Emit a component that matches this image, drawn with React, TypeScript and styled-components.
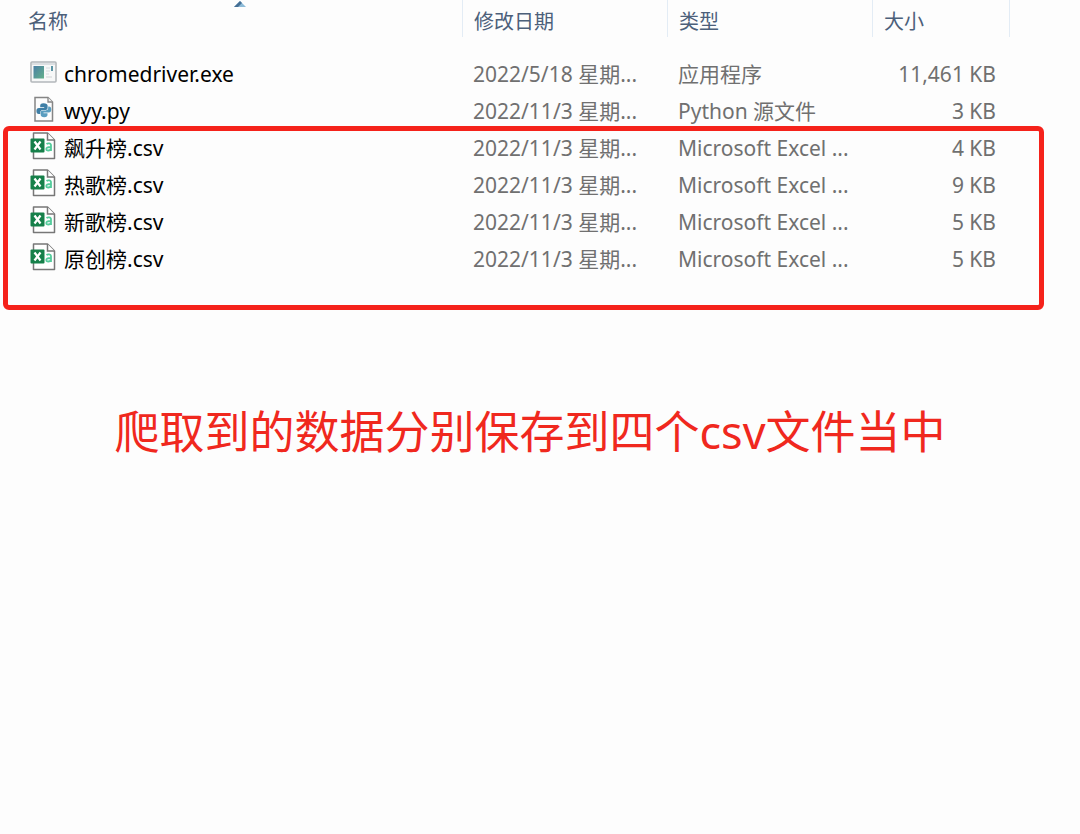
import React from 'react';
import styled, { createGlobalStyle } from 'styled-components';

const GlobalStyle = createGlobalStyle`
  *, *::before, *::after { box-sizing: border-box; }
  body {
    margin: 0;
    background: #fdfdfd;
    font-family: "Noto Sans", "Noto Sans CJK SC", sans-serif;
  }
`;

const Listing = styled.section`
  position: relative;
  padding: 0 70px 33px 0;
`;

const FileTable = styled.table`
  width: 100%;
  table-layout: fixed;
  border-collapse: collapse;
  font-size: 21px;
  line-height: 28px;
`;

const Column = styled.col<{ $width?: number }>`
  width: ${({ $width }) => ($width ? `${$width}px` : 'auto')};
`;

const HeaderCell = styled.th`
  height: 55px;
  padding: 0;
  vertical-align: top;
  font-size: 20px;
  font-weight: 400;
  text-align: left;
`;

const HeaderButton = styled.button<{ $indent: number }>`
  position: relative;
  display: flex;
  align-items: center;
  width: 100%;
  height: 37px;
  padding: 6px 0 0 ${({ $indent }) => $indent}px;
  border: 0;
  border-right: 1px solid #e3ecf5;
  background: none;
  color: #4c607a;
  font: inherit;
  cursor: pointer;
`;

const SortMark = styled.svg`
  position: absolute;
  top: 0;
  left: calc(50% + 2px);
`;

const Cell = styled.td<{ $right?: boolean }>`
  height: 37px;
  padding: 0 14px 0 10px;
  color: #707070;
  text-align: ${({ $right }) => ($right ? 'right' : 'left')};
  white-space: nowrap;
`;

const NameCell = styled(Cell)`
  padding-left: 30px;
  color: #000;
`;

const FileName = styled.div`
  display: flex;
  align-items: center;
  gap: 7px;
`;

const FileIcon = styled.svg`
  flex: none;
  margin-bottom: 4px;
`;

const Highlight = styled.div`
  position: absolute;
  inset: 126px 36px 0 3px;
  border: 5px solid #f5221b;
  border-radius: 6px;
  pointer-events: none;
`;

const Note = styled.p`
  margin: 0;
  padding: 90px 20px 0 0;
  color: #f0281e;
  font-size: 45px;
  line-height: 64px;
  text-align: center;
`;

function AppIcon() {
  return (
    <FileIcon width="27" height="28" viewBox="0 0 27 28" aria-hidden="true">
      <defs>
        <linearGradient id="screen" x1="0" y1="0" x2="1" y2="1">
          <stop offset="0" stopColor="#4b7fa5" />
          <stop offset="1" stopColor="#62b08a" />
        </linearGradient>
      </defs>
      <rect x="1" y="4" width="25" height="20" rx="1" fill="#f7f8f8" stroke="#b3b7ba" strokeWidth="1.6" />
      <path d="M2 6h23" stroke="#dcdfe2" strokeWidth="2" />
      <rect x="3.500" y="8" width="10.500" height="12.500" fill="url(#screen)" />
      <path d="M16 10h4M16 13h4M16 16h3" stroke="#d5dade" strokeWidth="1.200" />
      <path d="M22 8v5" stroke="#4a8a9c" strokeWidth="1.800" />
      <path d="M16 19h6" stroke="#dcdfe1" strokeWidth="1.500" />
    </FileIcon>
  );
}

function PythonIcon() {
  return (
    <FileIcon width="27" height="28" viewBox="0 0 27 28" aria-hidden="true">
      <path d="M5 2.500h13l4.500 4.500v19H5z" fill="#fdfdfd" stroke="#858585" strokeWidth="1.500" />
      <path d="M18 2.500v4.500h4.500" fill="#f0f0f0" stroke="#858585" strokeWidth="1.300" />
      <path
        d="M13.500 8.200c-2.500 0-3.300 1-3.300 2.400v1.600h4v.8H9c-1.800 0-2.600 1.300-2.600 3s.8 3 2.400 3h1.500v-1.700c0-1.300 1-2.300 2.300-2.300h3c1.200 0 2-.9 2-2v-2.400c0-1.400-1.300-2.400-4.100-2.400z"
        fill="#3f7fa6"
      />
      <path
        d="M14.200 22.200c2.500 0 3.300-1 3.300-2.400v-1.600h-4v-.8h5.200c1.800 0 2.600-1.300 2.600-3s-.8-3-2.400-3h-.7v1.700c0 1.300-1 2.300-2.300 2.300h-3.200c-1.200 0-2 .9-2 2v2.400c0 1.400 1.200 2.400 3.500 2.400z"
        fill="#5b9dbf"
      />
    </FileIcon>
  );
}

function CsvIcon() {
  return (
    <FileIcon width="27" height="28" viewBox="0 0 27 28" aria-hidden="true">
      <path d="M3.500 1h14l7 7v18.500h-21z" fill="#fff" stroke="#777" strokeWidth="1.500" strokeLinejoin="round" />
      <path d="M17.500 1v7h7" fill="#fff" stroke="#777" strokeWidth="1.500" />
      <path
        d="M16.500 12c1-.8 4.500-1.200 4.500 1.500v5.500M21 15c-2.500 0-4.700.2-4.700 2 0 2.300 3.800 1.700 4.700 0"
        fill="none"
        stroke="#55cc9c"
        strokeWidth="1.800"
      />
      <rect x="0.500" y="6.500" width="14" height="14" rx="1" fill="#16804a" />
      <path d="M4.500 9.500l6 8M10.500 9.500l-6 8" stroke="#fff" strokeWidth="2.200" />
    </FileIcon>
  );
}

const icons = { app: AppIcon, python: PythonIcon, csv: CsvIcon };

type FileRow = {
  name: string;
  date: string;
  type: string;
  size: string;
  kind: keyof typeof icons;
};

const files: FileRow[] = [
  { name: 'chromedriver.exe', date: '2022/5/18 星期...', type: '应用程序', size: '11,461 KB', kind: 'app' },
  { name: 'wyy.py', date: '2022/11/3 星期...', type: 'Python 源文件', size: '3 KB', kind: 'python' },
  { name: '飙升榜.csv', date: '2022/11/3 星期...', type: 'Microsoft Excel ...', size: '4 KB', kind: 'csv' },
  { name: '热歌榜.csv', date: '2022/11/3 星期...', type: 'Microsoft Excel ...', size: '9 KB', kind: 'csv' },
  { name: '新歌榜.csv', date: '2022/11/3 星期...', type: 'Microsoft Excel ...', size: '5 KB', kind: 'csv' },
  { name: '原创榜.csv', date: '2022/11/3 星期...', type: 'Microsoft Excel ...', size: '5 KB', kind: 'csv' },
];

const headers = ['名称', '修改日期', '类型', '大小'];

export default function App() {
  return (
    <main lang="zh-CN">
      <GlobalStyle />
      <Listing>
        <FileTable>
          <colgroup>
            <Column />
            <Column $width={205} />
            <Column $width={205} />
            <Column $width={137} />
          </colgroup>
          <thead>
            <tr>
              {headers.map((label, i) => (
                <HeaderCell key={label} scope="col" aria-sort={i === 0 ? 'ascending' : undefined}>
                  <HeaderButton type="button" $indent={i === 0 ? 28 : 11}>
                    {label}
                    {i === 0 && (
                      <SortMark width="14" height="8" viewBox="0 0 14 8" aria-hidden="true">
                        <path d="M7 1l6 6H1z" fill="#8dbbd8" />
                        <path d="M1 7l6-6 2 2-4 4z" fill="#466f94" />
                      </SortMark>
                    )}
                  </HeaderButton>
                </HeaderCell>
              ))}
            </tr>
          </thead>
          <tbody>
            {files.map((file) => {
              const Icon = icons[file.kind];
              return (
                <tr key={file.name}>
                  <NameCell>
                    <FileName>
                      <Icon />
                      {file.name}
                    </FileName>
                  </NameCell>
                  <Cell>{file.date}</Cell>
                  <Cell>{file.type}</Cell>
                  <Cell $right>{file.size}</Cell>
                </tr>
              );
            })}
          </tbody>
        </FileTable>
        <Highlight />
      </Listing>
      <Note>爬取到的数据分别保存到四个csv文件当中</Note>
    </main>
  );
}
